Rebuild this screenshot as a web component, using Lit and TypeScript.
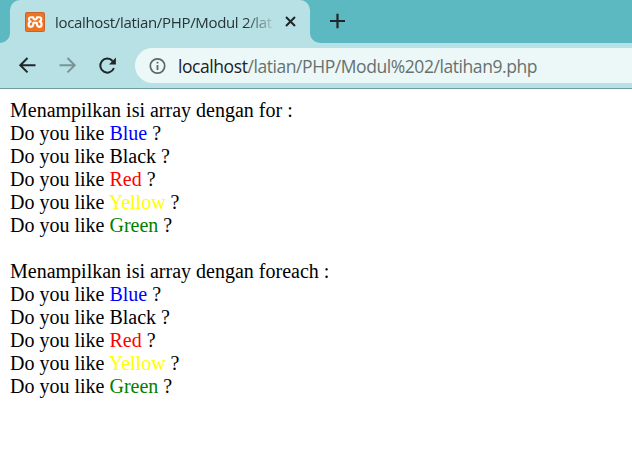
import { LitElement, html, css } from "lit";
import { customElement } from "lit/decorators.js";

const colours = ["Blue", "Black", "Red", "Yellow", "Green"];

@customElement("app-root")
export class AppRoot extends LitElement {
  static styles = css`
    :host { display: block; width: 632px; height: 467px; overflow: hidden; background: #fff; }
    svg { display: block; flex: none; }
    .strip { height: 43px; display: flex; background: #5cb8c1; }
    .corner { width: 10px; flex: none; background: #b8e1e5; overflow: hidden; }
    .corner::before { content: ""; display: block; height: 43px; background: #5cb8c1; }
    .left::before { border-bottom-right-radius: 10px; }
    .right::before { border-bottom-left-radius: 10px; }
    .tab { box-sizing: border-box; width: 300px; flex: none; padding-left: 15px; display: flex; align-items: center; background: #b8e1e5; border-radius: 10px 10px 0 0; }
    .title { width: 219px; margin-left: 10px; white-space: nowrap; font: 15px/24px "Open Sans", sans-serif; letter-spacing: -0.33px; color: #273437; -webkit-mask-image: linear-gradient(90deg, #000 190px, transparent 222px); mask-image: linear-gradient(90deg, #000 190px, transparent 222px); }
    .close { margin-left: 11px; }
    .plus { margin: 13px 0 0 10px; }
    .toolbar { box-sizing: border-box; height: 46px; padding: 5px 0 0 17px; display: flex; background: #b8e1e5; border-bottom: 1px solid #719da1; }
    .nav { width: 118px; height: 35px; display: flex; align-items: center; gap: 20px; flex: none; }
    .address { flex: 1; height: 35px; display: flex; align-items: center; background: #ecf8f8; border-radius: 18px 0 0 18px; padding-left: 14px; }
    .url { margin-left: 11px; white-space: nowrap; font: 17.5px/26px "Open Sans", sans-serif; letter-spacing: -0.43px; color: #66706f; }
    .host { color: #202124; }
    .page { padding: 10px; font: 20px/23px "Liberation Serif", serif; color: #000; }
    .group { margin-bottom: 23px; }
    .blue { color: #00f; }
    .red { color: #f00; }
    .yellow { color: #ff0; }
    .green { color: #008000; }
  `;

  private list(kind: string) {
    return html`<div class="group">
      <div>Menampilkan isi array dengan ${kind} :</div>
      ${colours.map((c) => html`<div>Do you like <span class=${c.toLowerCase()}>${c}</span> ?</div>`)}
    </div>`;
  }

  render() {
    return html`
      <div class="strip">
        <div class="corner left"></div>
        <div class="tab">
          <svg width="20" height="20" viewBox="0 0 20 20">
            <rect x=".5" y=".5" width="19" height="19" rx="1" fill="#ef7421" stroke="#c8642a" />
            <path d="M8.2 5.2H6C3.2 5.2 3.2 8.8 5.6 9.6C2.8 10.6 3 14.9 6 14.9C8.4 14.9 8.4 13 8.4 10.8H11.8C11.8 13 11.8 14.9 14.2 14.9C17.2 14.9 17.4 10.6 14.6 9.6C17 8.8 17 5.2 14.2 5.2H12C11.8 8.2 8.4 8.2 8.2 5.2Z" fill="none" stroke="#fff" stroke-width="2.1" stroke-linejoin="round" />
          </svg>
          <div class="title">localhost/latian/PHP/Modul 2/lat</div>
          <svg class="close" width="11" height="11" viewBox="0 0 11 11"><path d="M1 1L10 10M10 1L1 10" stroke="#202629" stroke-width="2" /></svg>
        </div>
        <div class="corner right"></div>
        <svg class="plus" width="15" height="16" viewBox="0 0 15 16"><path d="M7.5 .8V15.2M0 8H15" stroke="#202629" stroke-width="2.2" /></svg>
      </div>
      <div class="toolbar">
        <div class="nav">
          <svg width="20" height="20" viewBox="0 0 20 20"><path d="M18.5 9.2H3.7M10.5 2L3.3 9.2L10.5 16.4" fill="none" stroke="#202629" stroke-width="2" /></svg>
          <svg width="20" height="20" viewBox="0 0 20 20"><path d="M2.5 9.2H17M10.5 2L17.7 9.2L10.5 16.4" fill="none" stroke="#789498" stroke-width="2" /></svg>
          <svg width="20" height="20" viewBox="0 0 20 20"><path d="M16.9 12A7 7 0 1 1 15.6 5" fill="none" stroke="#202629" stroke-width="2" /><path d="M18.9 1.5V8.4H12Z" fill="#202629" /></svg>
        </div>
        <div class="address">
          <svg width="18" height="18" viewBox="0 0 18 18"><circle cx="8.5" cy="9" r="7.2" fill="none" stroke="#5c6568" stroke-width="1.7" /><path d="M8.5 8V13M8.5 4.8V6.6" stroke="#5c6568" stroke-width="1.8" /></svg>
          <div class="url"><span class="host">localhost</span>/latian/PHP/Modul%202/latihan9.php</div>
        </div>
      </div>
      <div class="page">${this.list("for")}${this.list("foreach")}</div>
    `;
  }
}
